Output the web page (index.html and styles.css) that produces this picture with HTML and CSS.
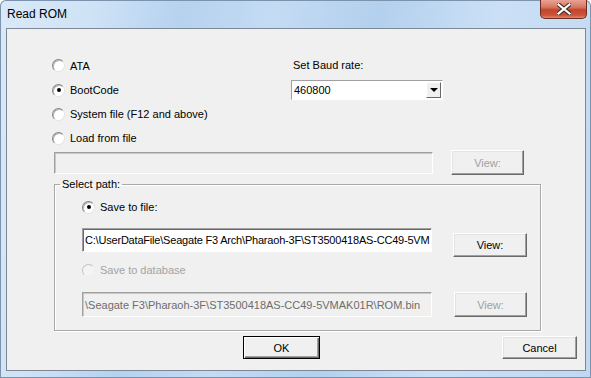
FILE: index.html
```html
<!DOCTYPE html>
<html lang="en">
<head>
    <meta charset="UTF-8">
    <title>Read ROM</title>
    <link rel="stylesheet" href="styles.css">
</head>
<body>
    <div class="window">
        <div class="titlebar">
            <span class="title">Read ROM</span>
            <button class="close">
                <svg width="14" height="12" viewBox="0 0 14 12">
                    <path d="M1.5 1.5 L12.5 10.5 M12.5 1.5 L1.5 10.5" stroke="#3b2a26" stroke-width="4.2" stroke-linecap="square"/>
                    <path d="M1.5 1.5 L12.5 10.5 M12.5 1.5 L1.5 10.5" stroke="#fff" stroke-width="2.2" stroke-linecap="square"/>
                </svg>
            </button>
        </div>

        <div class="client">
            <div class="top">
                <div class="source">
                    <label class="radio-row"><span class="radio"></span>ATA</label>
                    <label class="radio-row"><span class="radio checked"></span>BootCode</label>
                    <label class="radio-row"><span class="radio"></span>System file (F12 and above)</label>
                    <label class="radio-row"><span class="radio"></span>Load from file</label>
                </div>
                <div class="baud">
                    <div class="baud-label">Set Baud rate:</div>
                    <div class="combo">
                        <span class="combo-value">460800</span>
                        <span class="combo-drop"><span class="arrow"></span></span>
                    </div>
                </div>
            </div>

            <div class="file-row">
                <div class="textbox disabled load-box"></div>
                <button class="btn disabled load-view">View:</button>
            </div>

            <fieldset class="group">
                <legend>Select path:</legend>
                <div class="group-body">
                    <label class="radio-row"><span class="radio checked"></span>Save to file:</label>
                    <div class="path-row">
                        <div class="textbox path-box">C:\UserDataFile\Seagate F3 Arch\Pharaoh-3F\ST3500418AS-CC49-5VM</div>
                        <button class="btn path-view">View:</button>
                    </div>
                    <label class="radio-row muted"><span class="radio disabled"></span>Save to database</label>
                    <div class="db-row">
                        <div class="textbox disabled db-box">\Seagate F3\Pharaoh-3F\ST3500418AS-CC49-5VMAK01R\ROM.bin</div>
                        <button class="btn disabled db-view">View:</button>
                    </div>
                </div>
            </fieldset>

            <div class="actions">
                <button class="btn default ok">OK</button>
                <button class="btn cancel">Cancel</button>
            </div>
        </div>
    </div>
</body>
</html>
```

FILE: styles.css
```css
body {
    margin: 0;
    font-family: "Liberation Sans", Arial, sans-serif;
    font-size: 11px;
    color: #000;
    background: #fff;
}
.window {
    width: 591px;
    height: 378px;
    box-sizing: border-box;
    display: flex;
    flex-direction: column;
    padding: 0 5px 7px 6px;
    border-radius: 6px 6px 0 0;
    background: linear-gradient(100deg, #d9e9f8 0%, #cfe3f6 14%, #b6d2ef 28%, #c4dbf3 42%, #b3d0ee 58%, #cbe0f5 76%, #c0d8f2 100%);
    box-shadow: inset 0 0 0 1px #7c93ad;
}
.titlebar {
    height: 28px;
    display: flex;
    align-items: flex-start;
    justify-content: space-between;
}
.title {
    font-size: 12px;
    line-height: 28px;
    padding-left: 1px;
    color: #000;
}
.close {
    width: 47px;
    height: 19px;
    margin-right: -1px;
    padding: 0;
    border: 1px solid #6b2c22;
    border-top: none;
    border-radius: 0 0 5px 5px;
    background: linear-gradient(180deg, #e8a395 0%, #d7775f 40%, #c4442d 55%, #cc5539 85%, #e08a6c 100%);
    display: flex;
    align-items: center;
    justify-content: center;
}
.client {
    flex: 1;
    background: #f0f0f0;
    border: 1px solid #7d8894;
}

/* radios */
.radio-row {
    display: flex;
    align-items: center;
    height: 24px;
}
.radio {
    width: 11px;
    height: 11px;
    border-radius: 50%;
    border: 1px solid;
    border-color: #858585 #e2e2e2 #e2e2e2 #858585;
    background: #fff;
    box-shadow: inset 1px 1px 0 #b8b8b8;
    margin-right: 5px;
    display: flex;
    align-items: center;
    justify-content: center;
}
.radio.checked::after {
    content: "";
    width: 4px;
    height: 4px;
    border-radius: 50%;
    background: #000;
}
.radio.disabled {
    background: #f4f4f4;
    border-color: #c4c4c4 #eeeeee #eeeeee #c4c4c4;
    box-shadow: none;
}
.muted {
    color: #a3a3a3;
    margin-top: 1px;
}

/* top area */
.top {
    display: flex;
}
.source {
    width: 239px;
    padding: 24px 0 0 45px;
}
.source .radio-row:first-child {
    height: 25px;
}
.baud {
    padding-top: 30px;
}
.baud-label {
    line-height: 13px;
    padding-left: 2px;
}
.combo {
    margin-top: 8px;
    width: 152px;
    height: 20px;
    box-sizing: border-box;
    background: #fff;
    border: 1px solid;
    border-color: #a0a0a0 #fff #fff #a0a0a0;
    display: flex;
    align-items: center;
    justify-content: space-between;
    padding: 1px;
}
.combo-value {
    padding-left: 1px;
}
.combo-drop {
    width: 15px;
    height: 16px;
    box-sizing: border-box;
    background: #f0f0f0;
    border: 1px solid;
    border-color: #fff #696969 #696969 #fff;
    display: flex;
    align-items: center;
    justify-content: center;
}
.arrow {
    width: 0;
    height: 0;
    border-left: 4px solid transparent;
    border-right: 4px solid transparent;
    border-top: 4px solid #000;
}

/* text boxes and buttons */
.textbox {
    box-sizing: border-box;
    background: #fff;
    border: 1px solid;
    border-color: #a0a0a0 #fff #fff #a0a0a0;
    box-shadow: inset 1px 1px 0 #696969;
    padding: 0 0 0 2px;
    display: flex;
    align-items: center;
    white-space: nowrap;
    overflow: hidden;
}
.textbox.disabled {
    background: #f0f0f0;
    color: #6d6d6d;
    box-shadow: inset 1px 1px 0 #c8c8c8;
}
.btn {
    box-sizing: border-box;
    font-family: inherit;
    font-size: 11px;
    color: #000;
    background: #f0f0f0;
    border: 1px solid;
    border-color: #fff #696969 #696969 #fff;
    box-shadow: inset -1px -1px 0 #a0a0a0, inset 1px 1px 0 #e3e3e3;
    padding: 0;
}
.btn.disabled {
    color: #a0a0a0;
}
.btn.default {
    border-color: #000;
    box-shadow: inset 1px 1px 0 #fff, inset -1px -1px 0 #696969, inset -2px -2px 0 #a0a0a0;
}

.file-row {
    display: flex;
    align-items: center;
    padding-left: 47px;
    height: 25px;
}
.load-box {
    width: 379px;
    height: 22px;
}
.load-view {
    width: 73px;
    height: 25px;
    margin-left: 18px;
}

/* group */
.group {
    margin: 3px 0 0 47px;
    padding: 0;
    width: 487px;
    height: 153px;
    box-sizing: border-box;
    border: 1px solid #a9a9a9;
    box-shadow: inset 1px 1px 0 #fff, 1px 1px 0 #fff;
}
.group legend {
    margin-left: 5px;
    padding: 0 2px;
    line-height: 13px;
}
.group-body {
    padding: 4px 0 0 27px;
}
.path-row {
    display: flex;
    align-items: flex-start;
    margin-top: 9px;
}
.path-box {
    width: 350px;
    height: 24px;
    letter-spacing: -0.2px;
}
.path-view {
    width: 74px;
    height: 24px;
    margin: 5px 0 0 21px;
}
.db-row {
    display: flex;
    margin-top: 10px;
}
.db-box {
    width: 350px;
    height: 25px;
}
.db-view {
    width: 73px;
    height: 25px;
    margin-left: 22px;
}

.actions {
    display: flex;
    padding-left: 236px;
    margin-top: 5px;
}
.ok {
    width: 77px;
    height: 23px;
}
.cancel {
    width: 75px;
    height: 23px;
    margin-left: 182px;
}
```
